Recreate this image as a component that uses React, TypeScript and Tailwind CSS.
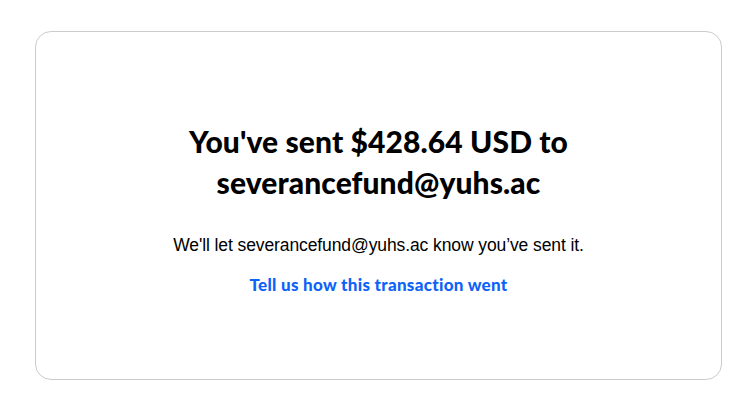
export default function App() {
  return (
    <div className="min-h-[406px] w-full bg-white pl-[35px] pr-[31px] pt-[31px] pb-[26px]">
      <section className="flex h-[349px] flex-col items-center rounded-[16px] border border-[#cccccc] bg-white pt-[89px] text-center">
        <h1 className="m-0 text-[30px] font-black leading-[41px] tracking-[0.1px] text-black [font-family:Lato,sans-serif]">
          You've sent $428.64 USD to
          <br />
          severancefund@yuhs.ac
        </h1>
        <p className="mt-[30px] text-[17.5px] leading-[24px] tracking-[-0.1px] text-black [font-family:'Liberation_Sans',Arial,sans-serif]">
          We'll let severancefund@yuhs.ac know you’ve sent it.
        </p>
        <a
          href="#"
          className="mt-[16px] text-[17px] font-black leading-[24px] tracking-[0.3px] text-[#0d63f8] [font-family:Lato,sans-serif]"
        >
          Tell us how this transaction went
        </a>
      </section>
    </div>
  )
}
